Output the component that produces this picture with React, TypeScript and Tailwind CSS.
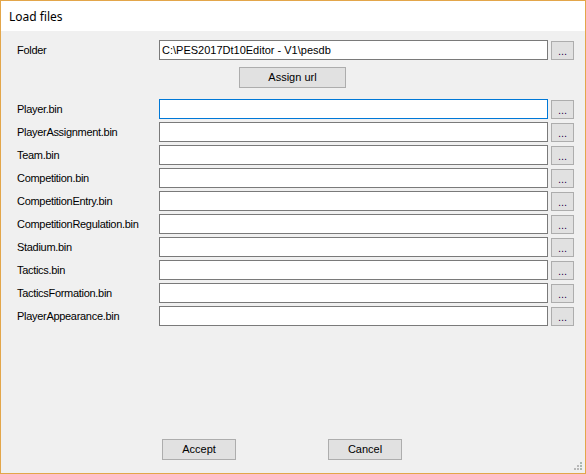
import React from "react";

const files = [
  "Player.bin",
  "PlayerAssignment.bin",
  "Team.bin",
  "Competition.bin",
  "CompetitionEntry.bin",
  "CompetitionRegulation.bin",
  "Stadium.bin",
  "Tactics.bin",
  "TacticsFormation.bin",
  "PlayerAppearance.bin",
];

function Row({ label, value, focused }: { label: string; value?: string; focused?: boolean }) {
  return (
    <div className="flex h-[20px] items-center">
      <div className="w-[158px] pl-[16px] text-[11px] leading-none tracking-[-0.3px] text-black">{label}</div>
      <div
        className={
          "h-[20px] w-[389px] border bg-white px-[2px] flex items-center text-[11px] leading-none text-black " +
          (focused ? "border-[#0078d7]" : "border-[#7a7a7a]")
        }
      >
        {value}
      </div>
      <div className="ml-[3px] mt-[1px] flex h-[19px] w-[23px] items-center justify-center border border-[#adadad] bg-[#e1e1e1] text-[11px] leading-none text-[#300050]">
        <span className="mt-[2px]">...</span>
      </div>
    </div>
  );
}

export default function App() {
  return (
    <div
      className="relative flex h-[474px] w-[586px] flex-col border border-[#e3a64a] bg-[#f0f0f0]"
      style={{ fontFamily: '"Liberation Sans", Arial, sans-serif' }}
    >
      <div
        className="flex h-[30px] items-center bg-white pl-[8px] text-[12px] text-black"
        style={{ fontFamily: '"Noto Sans", "Open Sans", sans-serif' }}
      >
        <span className="mt-[1px]">Load files</span>
      </div>
      <div className="flex flex-1 flex-col pt-[9px] pb-[13px]">
        <Row label="Folder" value="C:\PES2017Dt10Editor - V1\pesdb" />
        <div className="mt-[7px] ml-[238px] flex h-[21px] w-[107px] items-center justify-center border border-[#adadad] bg-[#e1e1e1] text-[11px] text-black">
          Assign url
        </div>
        <div className="mt-[11px] flex flex-col gap-[3px]">
          {files.map((f, i) => (
            <Row key={f} label={f} focused={i === 0} />
          ))}
        </div>
        <div className="mt-auto flex">
          <div className="ml-[161px] flex h-[21px] w-[74px] items-center justify-center border border-[#adadad] bg-[#e1e1e1] text-[11px] text-black">
            Accept
          </div>
          <div className="ml-[92px] flex h-[21px] w-[74px] items-center justify-center border border-[#adadad] bg-[#e1e1e1] text-[11px] text-black">
            Cancel
          </div>
        </div>
      </div>
      <svg className="absolute right-[2px] bottom-[2px]" width="10" height="10" viewBox="0 0 10 10">
        <rect x="7" y="1" width="2" height="2" fill="#a8b8b0" />
        <rect x="4" y="4" width="2" height="2" fill="#b8b8b8" />
        <rect x="7" y="4" width="2" height="2" fill="#a8b8b0" />
        <rect x="1" y="7" width="2" height="2" fill="#b8b8b8" />
        <rect x="4" y="7" width="2" height="2" fill="#b8b8b8" />
        <rect x="7" y="7" width="2" height="2" fill="#a8b8b0" />
      </svg>
    </div>
  );
}
